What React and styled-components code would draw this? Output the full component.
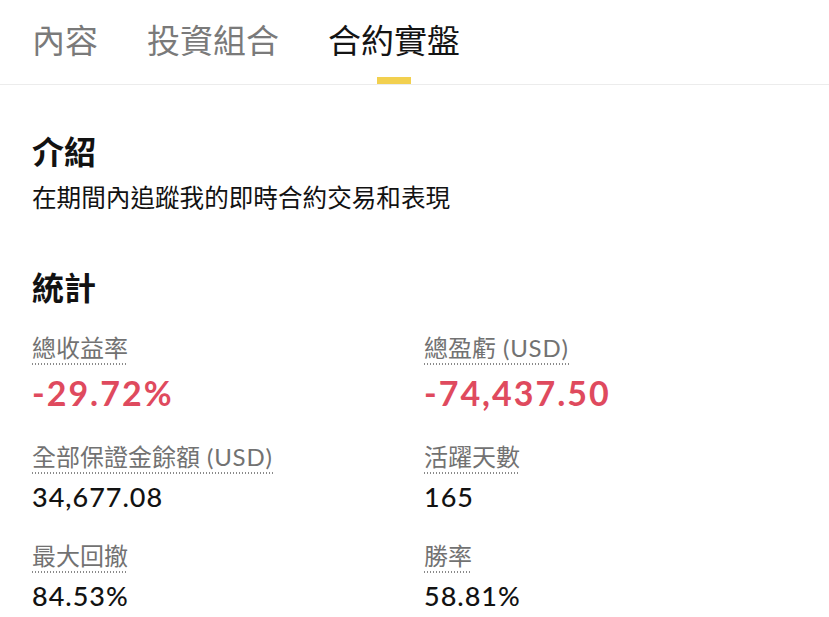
import React from 'react';
import styled, { createGlobalStyle } from 'styled-components';

const GlobalStyle = createGlobalStyle`
    body {
        margin: 0;
        background: #fff;
        font-family: Lato, "Noto Sans CJK TC", sans-serif;
        color: #121212;
    }
`;

const TabBar = styled.nav`
    display: flex;
    gap: 49px;
    height: 84px;
    padding: 0 32px;
    border-bottom: 1px solid #ececec;
`;

const Tab = styled.div`
    position: relative;
    display: flex;
    align-items: center;
    padding-bottom: 5px;
    font-family: "Noto Sans CJK TC", sans-serif;
    font-size: 33px;
    line-height: 1;
    color: ${({ $active }) => ($active ? '#141414' : '#7a7a7a')};

    &::after {
        content: '';
        display: ${({ $active }) => ($active ? 'block' : 'none')};
        position: absolute;
        left: 50%;
        bottom: 0;
        width: 34px;
        height: 7px;
        margin-left: -17px;
        background: #f2d04f;
    }
`;

const Content = styled.main`
    padding: 45px 32px 0;
`;

const Heading = styled.h2`
    margin: 0;
    font-family: "Noto Sans CJK TC", sans-serif;
    font-size: 32px;
    font-weight: 700;
    line-height: 40px;
`;

const Intro = styled.p`
    margin: 9px 0 53px;
    font-family: "Noto Sans CJK TC", sans-serif;
    font-size: 24.6px;
    line-height: 34px;
`;

const StatGrid = styled.div`
    display: grid;
    grid-template-columns: 392px 1fr;
    row-gap: 24px;
    margin-top: 25px;
`;

const Stat = styled.div`
    display: flex;
    flex-direction: column;
    align-items: flex-start;
    gap: 6px;
`;

const Label = styled.span`
    position: relative;
    font-size: 24px;
    line-height: 33px;
    color: #727272;

    &::after {
        content: '';
        position: absolute;
        left: 0;
        right: 0;
        bottom: -1px;
        height: 2px;
        background-image: linear-gradient(to right, #8a8a8a 0 1.5px, transparent 1.5px);
        background-size: 3px 2px;
    }
`;

const Unit = styled.span`
    letter-spacing: 0.8px;
`;

const Value = styled.span`
    font-size: ${({ $big }) => ($big ? '34px' : '27px')};
    line-height: ${({ $big }) => ($big ? '46px' : '36px')};
    font-weight: ${({ $big }) => ($big ? 700 : 500)};
    letter-spacing: ${({ $big }) => ($big ? '2px' : '1px')};
    color: ${({ $negative }) => ($negative ? '#df4a5e' : '#121212')};
`;

const stats = [
    { label: '總收益率', value: '-29.72%', big: true },
    { label: '總盈虧', unit: 'USD', value: '-74,437.50', big: true },
    { label: '全部保證金餘額', unit: 'USD', value: '34,677.08' },
    { label: '活躍天數', value: '165' },
    { label: '最大回撤', value: '84.53%' },
    { label: '勝率', value: '58.81%' },
];

const tabs = ['內容', '投資組合', '合約實盤'];

const App = () => {
    return (
        <>
            <GlobalStyle />
            <TabBar>
                {tabs.map((t, i) => (
                    <Tab key={t} $active={i === 2}>{t}</Tab>
                ))}
            </TabBar>
            <Content>
                <Heading>介紹</Heading>
                <Intro>在期間內追蹤我的即時合約交易和表現</Intro>
                <Heading>統計</Heading>
                <StatGrid>
                    {stats.map((s) => (
                        <Stat key={s.label}>
                            <Label>
                                {s.label}
                                {s.unit && <Unit> ({s.unit})</Unit>}
                            </Label>
                            <Value $big={s.big} $negative={s.value.startsWith('-')}>{s.value}</Value>
                        </Stat>
                    ))}
                </StatGrid>
            </Content>
        </>
    );
};

export default App;
